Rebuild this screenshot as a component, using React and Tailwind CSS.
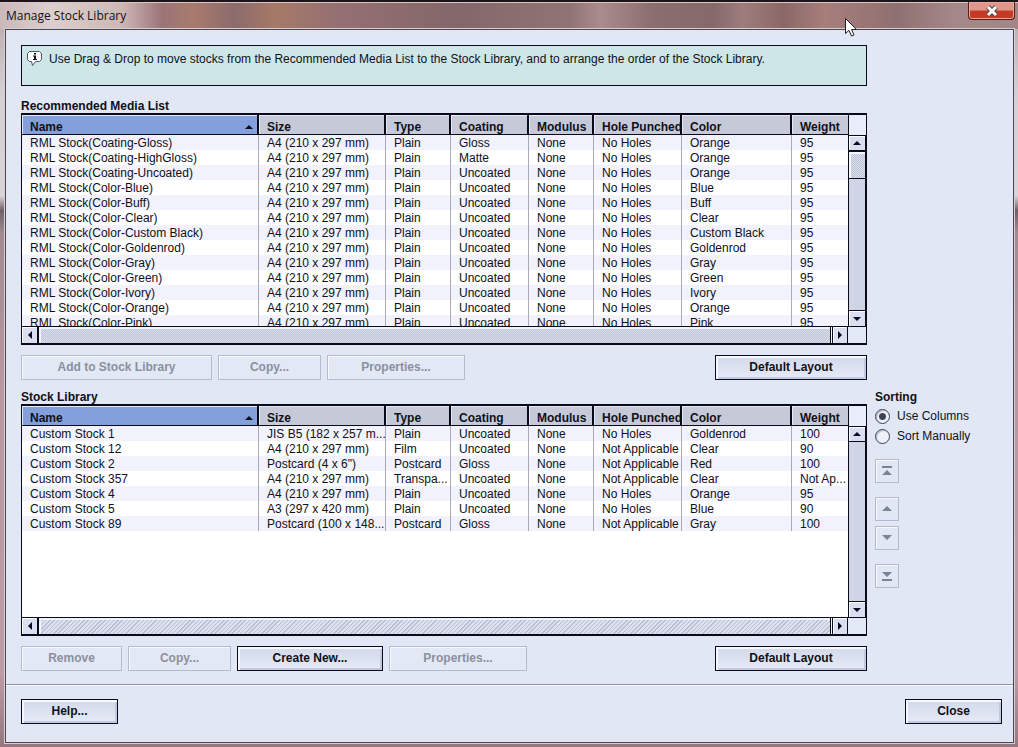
const columns = [
  { label: "Name", width: "" },
  { label: "Size", width: "w-[127px]" },
  { label: "Type", width: "w-[65px]" },
  { label: "Coating", width: "w-[78px]" },
  { label: "Modulus", width: "w-[65px]" },
  { label: "Hole Punched", width: "w-[88px]" },
  { label: "Color", width: "w-[110px]" },
  { label: "Weight", width: "w-[56px]" },
];

const a4 = "A4 (210 x 297 mm)";

const mediaList = [
  ["RML Stock(Coating-Gloss)", a4, "Plain", "Gloss", "None", "No Holes", "Orange", "95"],
  ["RML Stock(Coating-HighGloss)", a4, "Plain", "Matte", "None", "No Holes", "Orange", "95"],
  ["RML Stock(Coating-Uncoated)", a4, "Plain", "Uncoated", "None", "No Holes", "Orange", "95"],
  ["RML Stock(Color-Blue)", a4, "Plain", "Uncoated", "None", "No Holes", "Blue", "95"],
  ["RML Stock(Color-Buff)", a4, "Plain", "Uncoated", "None", "No Holes", "Buff", "95"],
  ["RML Stock(Color-Clear)", a4, "Plain", "Uncoated", "None", "No Holes", "Clear", "95"],
  ["RML Stock(Color-Custom Black)", a4, "Plain", "Uncoated", "None", "No Holes", "Custom Black", "95"],
  ["RML Stock(Color-Goldenrod)", a4, "Plain", "Uncoated", "None", "No Holes", "Goldenrod", "95"],
  ["RML Stock(Color-Gray)", a4, "Plain", "Uncoated", "None", "No Holes", "Gray", "95"],
  ["RML Stock(Color-Green)", a4, "Plain", "Uncoated", "None", "No Holes", "Green", "95"],
  ["RML Stock(Color-Ivory)", a4, "Plain", "Uncoated", "None", "No Holes", "Ivory", "95"],
  ["RML Stock(Color-Orange)", a4, "Plain", "Uncoated", "None", "No Holes", "Orange", "95"],
  ["RML Stock(Color-Pink)", a4, "Plain", "Uncoated", "None", "No Holes", "Pink", "95"],
];

const stockLibrary = [
  ["Custom Stock 1", "JIS B5 (182 x 257 m...", "Plain", "Uncoated", "None", "No Holes", "Goldenrod", "100"],
  ["Custom Stock 12", a4, "Film", "Uncoated", "None", "Not Applicable", "Clear", "90"],
  ["Custom Stock 2", "Postcard (4 x 6\")", "Postcard", "Gloss", "None", "Not Applicable", "Red", "100"],
  ["Custom Stock 357", a4, "Transpa...", "Uncoated", "None", "Not Applicable", "Clear", "Not Ap..."],
  ["Custom Stock 4", a4, "Plain", "Uncoated", "None", "No Holes", "Orange", "95"],
  ["Custom Stock 5", "A3 (297 x 420 mm)", "Plain", "Uncoated", "None", "No Holes", "Blue", "90"],
  ["Custom Stock 89", "Postcard (100 x 148...", "Postcard", "Gloss", "None", "Not Applicable", "Gray", "100"],
];

const arrows = {
  up: "M0 4 L4 0 L8 4 Z",
  down: "M0 0 L8 0 L4 4 Z",
  left: "M4 0 L4 8 L0 4 Z",
  right: "M0 0 L4 4 L0 8 Z",
};

function Arrow({ dir }) {
  const flat = dir === "up" || dir === "down";
  return (
    <svg width={flat ? 8 : 4} height={flat ? 4 : 8} fill="#0a0a20" aria-hidden="true">
      <path d={arrows[dir]} />
    </svg>
  );
}

function ScrollButton({ dir, className }) {
  return (
    <button
      type="button"
      aria-label={"Scroll " + dir}
      className={"flex shrink-0 items-center justify-center border-[#0a0a18] bg-[#d9dff0] shadow-[inset_1px_1px_0_#fff] " + className}
    >
      <Arrow dir={dir} />
    </button>
  );
}

function StockTable({ title, rows, thumb, grip }) {
  return (
    <div className="border border-y-2 border-[#0a0a18] bg-white">
      <div className="flex h-[211px]">
        <div className="min-w-0 flex-1 overflow-hidden">
          <table className="w-full table-fixed border-separate border-spacing-0" aria-label={title}>
            <thead>
              <tr>
                {columns.map((col, i) => (
                  <th
                    key={col.label}
                    scope="col"
                    className={
                      "h-5 border-b border-[#0a0a18] p-0 pt-[5px] pl-2 text-left leading-[14px] font-bold whitespace-nowrap shadow-[inset_1px_1px_0_#e6e9f2] " +
                      (i < columns.length - 1 ? "border-r-2 " : "") +
                      (i === 0 ? "bg-[#839fdc] " : "bg-[#c6cad8] ") +
                      col.width
                    }
                  >
                    {i === 0 ? (
                      <span className="flex items-center justify-between pr-1">
                        {col.label}
                        <Arrow dir="up" />
                      </span>
                    ) : (
                      col.label
                    )}
                  </th>
                ))}
              </tr>
            </thead>
            <tbody>
              {rows.map((row) => (
                <tr key={row[0]} className="odd:bg-[#f1f2fb]">
                  {row.map((cell, i) => (
                    <td
                      key={i}
                      className={
                        "h-[15px] p-0 pt-px pl-2 leading-[14px] whitespace-nowrap " +
                        (i < row.length - 1 ? "border-r border-[#a9acb8]" : "")
                      }
                    >
                      {cell}
                    </td>
                  ))}
                </tr>
              ))}
            </tbody>
          </table>
        </div>
        <div className="flex w-[18px] shrink-0 flex-col border-l border-[#0a0a18]">
          <div className="h-5 shrink-0 bg-[#eaeefa]"></div>
          <div className="flex flex-1 flex-col border-r border-[#0a0a18] bg-[#cfd4e6]">
            <ScrollButton dir="up" className="h-4 border-t border-b" />
            {thumb && (
              <div className="h-7 border-t border-b border-[#0a0a18] bg-[repeating-conic-gradient(#bcc2d6_0_25%,#dde1ef_0_50%)] bg-size-[2px_2px] shadow-[inset_2px_2px_0_#f4f6ff]"></div>
            )}
            <div className="flex-1"></div>
            <ScrollButton dir="down" className="h-4 border-t" />
          </div>
        </div>
      </div>
      <div className="flex h-[17px] border-t border-[#0a0a18]">
        <ScrollButton dir="left" className="w-[17px] border-r-2" />
        <div className={"min-w-0 flex-1 border-r border-[#0a0a18] shadow-[inset_2px_2px_0_#f0f2fc] " + grip}></div>
        <ScrollButton dir="right" className="ml-px w-4 border-x" />
        <div className="w-[18px] shrink-0 bg-[#e4e9f7]"></div>
      </div>
    </div>
  );
}

function Button({ children, className, disabled }) {
  return (
    <button
      type="button"
      disabled={disabled}
      className={
        "h-[25px] shrink-0 border text-center leading-[15px] font-bold " +
        (disabled
          ? "border-[#b4bccb] bg-[#e3e8f5] text-[#8b909f] shadow-[inset_1px_1px_0_#f8faff] "
          : "border-[#0a0a18] bg-linear-to-b from-[#d3d9ea] to-[#e6eaf8] shadow-[inset_3px_3px_0_-1px_#f6f8ff,inset_-2px_-2px_0_#c3c9e0] ") +
        className
      }
    >
      {children}
    </button>
  );
}

function MoveButton({ label, path, className }) {
  return (
    <button
      type="button"
      disabled
      aria-label={label}
      className={"flex h-6 w-6 items-center justify-center border border-[#b4bac8] bg-[#e2e7f4] shadow-[inset_1px_1px_0_#f8faff] " + className}
    >
      <svg width="12" height="12" fill="#7e8390" aria-hidden="true">
        <path d={path} />
      </svg>
    </button>
  );
}

function Radio({ label, defaultChecked }) {
  return (
    <label className="flex h-5 items-center gap-[7px]">
      <input
        type="radio"
        name="sorting"
        defaultChecked={defaultChecked}
        className="h-[15px] w-[15px] appearance-none rounded-full border border-[#3c4254] bg-[#eef1fa] shadow-[inset_1px_1px_1px_#b3b9c9] checked:bg-[radial-gradient(circle,#3f4454_0_3px,#eef1fa_4px)]"
      />
      {label}
    </label>
  );
}

export default function App() {
  return (
    <div className="relative flex min-h-screen flex-col border-t-2 border-[#1c1418] bg-[linear-gradient(180deg,#b5a6a7_0%,#d4cfd2_12%,#d9d4d8_26%,#6f6165_28%,#a08a90_31%,#b8979f_50%,#bd9da5_90%,#94777f_100%)] pr-1 pb-1 pl-[5px] font-['Liberation_Sans',Arial,sans-serif] text-xs text-[#101018]">
      <header className="-mr-1 -ml-[5px] flex h-[27px] items-start justify-between bg-[linear-gradient(90deg,#c9b9b8_0%,#dccfcd_5%,#cdb7b5_12%,#9a7476_16%,#a97b6d_19%,#8b6b6c_23%,#a57a66_27%,#957072_33%,#83676a_45%,#8a6d6f_50%,#8f7375_56%,#ab8c8e_59%,#8b6e70_64%,#86696b_70%,#9d7c7c_73%,#8a6867_77%,#a67f7b_81%,#8f7070_88%,#a58988_94%,#a08687_100%)] pr-[3px] pl-1.5 shadow-[inset_0_1px_0_#d9c6c6]">
        <h1 className="pt-1 font-['Open_Sans',sans-serif] text-xs leading-[19px]">Manage Stock Library</h1>
        <button
          type="button"
          aria-label="Close window"
          className="flex h-[18px] w-[47px] items-center justify-center rounded-b border border-t-0 border-[#5a1a18] bg-linear-to-b from-[#e0968a] from-45% to-[#c53a25] to-55% shadow-[inset_0_0_0_1px_#eba99c]"
        >
          <svg width="14" height="12" viewBox="0 0 14 12" aria-hidden="true">
            <path d="M3 2 L11 10 M11 2 L3 10" stroke="#54423f" strokeWidth="5" />
            <path d="M3 2 L11 10 M11 2 L3 10" stroke="#fff" strokeWidth="3" />
          </svg>
        </button>
      </header>

      <main className="flex flex-1 flex-col border border-[#4c4650] bg-[#e1e7f5] shadow-[0_0_0_1px_#d8cdd2]">
        <div className="flex-1 pt-[15px] pb-[13px] pl-[15px]">
          <div className="pr-[146px]">
            <div className="flex h-[41px] items-start gap-1.5 border border-[#0a0a18] bg-[#cfe6e9] pt-1 pl-1">
              <svg width="17" height="18" viewBox="0 0 17 18" aria-hidden="true">
                <path
                  d="M3.5 1.5 H13.5 L15.5 3.5 V9.5 L13.5 11.5 H9.5 L6.5 15.5 L5.5 11.5 H3.5 L1.5 9.5 V3.5 Z"
                  fill="#fff"
                  stroke="#4a5560"
                />
                <path d="M8 3 H10 V4.500 H8 Z M7 5.500 H10 V9 H11 V10 H7 V9 H8 V6.500 H7 Z" fill="#101018" />
              </svg>
              <p className="pt-0.5 leading-[14px]">
                Use Drag &amp; Drop to move stocks from the Recommended Media List to the Stock Library, and to arrange the order of the Stock Library.
              </p>
            </div>
            <h2 className="pt-[13px] leading-[14px] font-bold">Recommended Media List</h2>
            <StockTable
              title="Recommended Media List"
              rows={mediaList}
              thumb
              grip="bg-[repeating-conic-gradient(#bcc2d6_0_25%,#dde1ef_0_50%)] bg-size-[2px_2px]"
            />
            <div className="flex gap-1.5 pt-2.5">
              <Button disabled className="w-[191px]">Add to Stock Library</Button>
              <Button disabled className="w-[103px]">Copy...</Button>
              <Button disabled className="w-[138px]">Properties...</Button>
              <Button className="ml-auto w-[152px]">Default Layout</Button>
            </div>
          </div>

          <div className="flex">
            <section className="min-w-0 flex-1">
              <h2 className="pt-2.5 leading-[14px] font-bold">Stock Library</h2>
              <StockTable
                title="Stock Library"
                rows={stockLibrary}
                grip="bg-[repeating-linear-gradient(135deg,#b9bfd4_0_1px,#dde1ef_1px_3px)]"
              />
              <div className="flex gap-1.5 pt-2.5">
                <Button disabled className="w-[101px]">Remove</Button>
                <Button disabled className="w-[103px]">Copy...</Button>
                <Button className="w-[146px]">Create New...</Button>
                <Button disabled className="w-[138px]">Properties...</Button>
                <Button className="ml-auto w-[152px]">Default Layout</Button>
              </div>
            </section>

            <aside className="w-[146px] shrink-0 pt-2.5 pl-2">
              <fieldset>
                <legend className="mb-0.5 leading-[14px] font-bold">Sorting</legend>
                <Radio label="Use Columns" defaultChecked />
                <Radio label="Sort Manually" />
              </fieldset>
              <div className="flex flex-col pt-[13px]">
                <MoveButton label="Move to top" path="M1 1 H11 V3 H1 Z M1 10 L6 5 L11 10 Z" className="mb-3.5" />
                <MoveButton label="Move up" path="M1 8 L6 3 L11 8 Z" className="mb-[5px]" />
                <MoveButton label="Move down" path="M1 3 H11 L6 8 Z" className="mb-3.5" />
                <MoveButton label="Move to bottom" path="M1 2 H11 L6 7 Z M1 9 H11 V11 H1 Z" className="" />
              </div>
            </aside>
          </div>
        </div>

        <footer className="flex justify-between border-t border-[#8e94a8] pt-3.5 pr-[11px] pb-[18px] pl-[15px] shadow-[inset_0_1px_0_#fff]">
          <Button className="w-[97px]">Help...</Button>
          <Button className="w-[97px]">Close</Button>
        </footer>
      </main>

      {/* mouse pointer */}
      <svg className="absolute top-4 left-[845px]" width="13" height="20" viewBox="0 0 13 20" aria-hidden="true">
        <path d="M0.5 0.5 V15.5 L4 12.3 L6.500 18 L9 17 L6.600 11.500 H11.500 Z" fill="#fff" stroke="#222" />
      </svg>
    </div>
  );
}
